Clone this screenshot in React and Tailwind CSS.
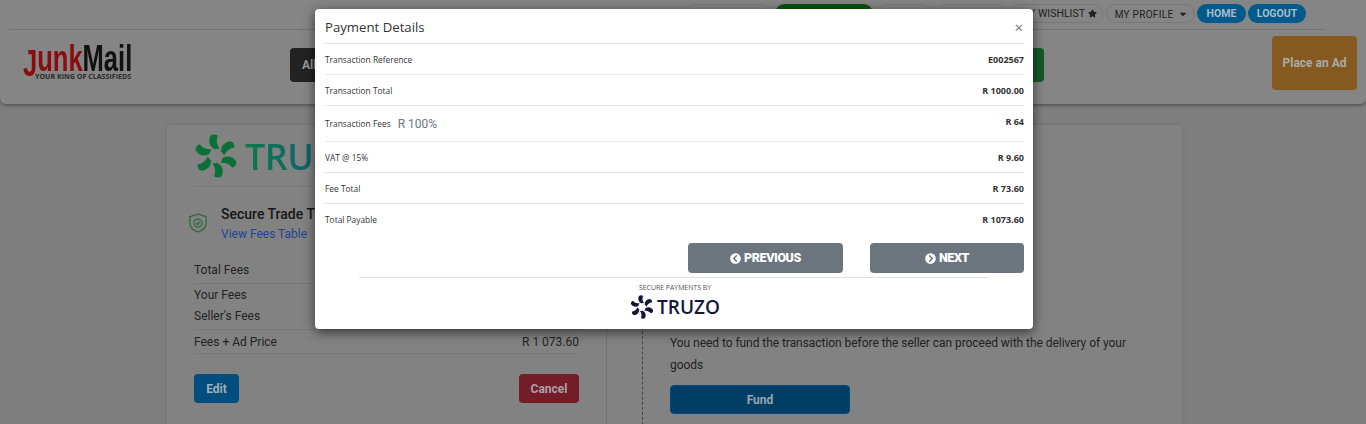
import { FaCaretDown, FaChevronCircleLeft, FaChevronCircleRight, FaStar } from "react-icons/fa";

const rows = [
  { label: "Transaction Reference", value: "E002567", h: "h-[31px]" },
  { label: "Transaction Total", value: "R 1000.00", h: "h-[31px]" },
  { label: "Transaction Fees", extra: "R 100%", value: "R 64", h: "h-[36px]" },
  { label: "VAT @ 15%", value: "R 9.60", h: "h-[31px]" },
  { label: "Fee Total", value: "R 73.60", h: "h-[31px]" },
  { label: "Total Payable", value: "R 1073.60", h: "h-[31px]", last: true },
];

// swirl mark of the truzo logo
const Swirl = ({ className, color }) => (
  <svg viewBox="0 0 48 48" className={className} fill={color}>
    {[0, 60, 120, 180, 240, 300].map((r) => (
      <path
        key={r}
        transform={`rotate(${r} 24 24)`}
        d="M23 17 C17 14 15 8 18 2 C20 0 24 0 26 2 C24 7 25 12 28 16 C26 16 24 16 23 17 Z"
      />
    ))}
  </svg>
);

const Pill = ({ children, className = "" }) => (
  <div className={`h-[19px] rounded-full border border-[#797979] flex items-center justify-center text-[10.500px] text-[#222] ${className}`}>
    {children}
  </div>
);

const FeeRow = ({ label, value }) => (
  <div className="flex justify-between items-center h-[21px]">
    <span>{label}</span>
    <span>{value}</span>
  </div>
);

const Header = () => (
  <div className="h-[104px] bg-[#858585] rounded-b-md shadow-[0_1px_4px_rgba(0,0,0,0.45)] relative z-10">
    <div className="ml-[9px] w-[1316px] h-[30px] border-b border-[#737373] flex justify-end items-start pt-1 pr-[19px]">
      <Pill className="w-[85px] mr-[5px]">BLOG</Pill>
      <div className="w-[98px] h-[19px] rounded-full bg-[#0f5010] mr-[5px]" />
      <Pill className="w-[52px] mr-[7px]">HELP</Pill>
      <Pill className="w-[68px] mr-[6px]">ALERTS</Pill>
      <Pill className="w-[92px] mr-[3px] gap-[3px] pl-[3px]">MY WISHLIST <FaStar className="w-[9px] h-[9px]" /></Pill>
      <Pill className="w-[89px] mr-[2px] gap-[5px] pl-[2px] pt-[1px]">
        <span className="text-[10px] tracking-[0.3px]">MY PROFILE</span> <FaCaretDown className="w-[10px] h-[10px]" />
      </Pill>
      <div className="w-[49px] mr-[2px] h-[19px] rounded-full bg-[#005a8c] text-[#a8bcc8] text-[10.500px] font-bold flex items-center justify-center">HOME</div>
      <div className="w-[58px] h-[19px] rounded-full bg-[#005a8c] text-[#a8bcc8] text-[10.500px] font-bold flex items-center justify-center">LOGOUT</div>
    </div>
    <div className="flex items-start pl-[23px] pr-[9px]">
      <div className="w-[109px] mt-[9px] relative h-[44px]">
        <div className="font-['Liberation_Sans'] font-bold text-[37px] leading-[40px] text-[#111] origin-left scale-x-[0.69] whitespace-nowrap">
          <span className="text-[#8a0c0c] relative top-[5px]">J</span>
          <span className="text-[#8a0c0c]">unk</span>Mail
        </div>
        <div className="absolute left-[12px] top-[33px] text-[7.100px] leading-[8px] font-bold font-['Open_Sans'] text-[#2a2a2a] whitespace-nowrap">YOUR KING OF CLASSIFIEDS</div>
      </div>
      <div className="ml-[158px] w-[754px] mt-[18px] h-[34px] flex">
        <div className="w-[60px] bg-[#222] rounded-l text-[#999] text-xs font-bold flex items-center pl-3">All</div>
        <div className="flex-1 bg-[#808080]" />
        <div className="w-[60px] bg-[#145c28] rounded-r" />
      </div>
      <div className="ml-auto mt-[6px] w-[85px] h-[54px] rounded bg-[#855a20] text-[#aaa] text-xs font-bold flex items-center justify-center">
        Place an Ad
      </div>
    </div>
  </div>
);

const Card = () => (
  <div className="mx-[167px] mt-[21px] w-[1015px] h-[320px] bg-[#828282] shadow-[0_0_6px_rgba(0,0,0,0.12)] flex text-xs text-[#222]">
    <div className="w-[440px] h-full border-r border-[#737373] px-[27px] pt-[10px]">
      <div className="flex items-center gap-[7px] h-[42px]">
        <Swirl className="w-[44px] h-[44px]" color="#0a7038" />
        <span className="text-[36px] leading-[42px] pt-[2px] font-semibold font-['Open_Sans'] tracking-[-0.500px] bg-gradient-to-r from-[#0a7a48] to-[#1a4f80] bg-clip-text text-transparent">TRUZO</span>
      </div>
      <div className="border-b border-[#787878] h-[10px]" />
      <div className="flex items-start mt-[17px] -ml-[5px]">
        <svg viewBox="2 1 20 22" className="w-[18px] h-[22px] mt-[8px] mr-[14px]" fill="none" stroke="#1d6a2c" strokeWidth="1.200">
          <path d="M12 2 L21 5 V12 C21 17 17 20.500 12 22 C7 20.500 3 17 3 12 V5 Z" />
          <circle cx="12" cy="12" r="4.500" />
          <path d="M10 12 L11.500 13.500 L14 10.500" />
        </svg>
        <div>
          <div className="text-[14px] font-medium text-[#161616] leading-5">Secure Trade Transaction</div>
          <div className="text-[#1e4596] leading-5">View Fees Table</div>
        </div>
      </div>
      <div className="mt-[13px] h-[27px] border-b border-[#787878] flex justify-between items-center pb-[1px]">
        <span>Total Fees</span>
        <span>R 73.60</span>
      </div>
      <div className="border-b border-[#787878] pb-[3px]">
        <FeeRow label="Your Fees" value="R 73.60" />
        <FeeRow label="Seller's Fees" value="R 0.00" />
      </div>
      <div className="h-[24px] border-b border-[#787878] flex justify-between items-center">
        <span>Fees + Ad Price</span>
        <span>R 1 073.60</span>
      </div>
      <div className="flex justify-between mt-[20px]">
        <div className="w-[45px] h-[29px] rounded-sm bg-[#004d80] text-[#a0b0b8] font-bold flex items-center justify-center">Edit</div>
        <div className="w-[60px] h-[29px] rounded-sm bg-[#741c28] text-[#a8a0a8] font-bold flex items-center justify-center">Cancel</div>
      </div>
    </div>
    <div className="ml-[35px] h-full border-l border-dashed border-[#444] pl-[27px] pt-[207px] w-[500px]">
      <p className="leading-[22px] w-[480px] tracking-[-0.050px]">You need to fund the transaction before the seller can proceed with the delivery of your goods</p>
      <div className="w-[180px] h-[29px] mt-[9px] rounded-sm bg-[#003e66] border border-[#004a80] text-[#99a8b0] font-bold flex items-center justify-center">Fund</div>
    </div>
  </div>
);

const PaymentModal = () => (
  <div className="absolute left-[315px] top-[9px] z-30 w-[718px] h-[320px] bg-white rounded-sm shadow-[0_3px_12px_rgba(0,0,0,0.6)] pl-[10px] pr-[9px] font-['Open_Sans']">
    <div className="h-[35px] border-b border-[#e5e7eb] flex items-center justify-between pt-[3px]">
      <span className="text-[13.200px] text-[#333]">Payment Details</span>
      <span className="text-[15px] text-[#777] leading-none pr-[1px]">×</span>
    </div>
    {rows.map((r) => (
      <div key={r.label} className={`${r.h} ${r.last ? "" : "border-b border-[#e5e7eb]"} flex items-center justify-between pt-[1px]`}>
        <span className={`text-[8.400px] text-[#333] flex items-center gap-[7px] ${r.extra ? "" : "pt-[1px]"}`}>
          {r.label}
          {r.extra && <span className="text-[12px] text-[#6c757d] font-['Roboto']">{r.extra}</span>}
        </span>
        <span className={`text-[9px] font-bold text-[#333] ${r.extra ? "pb-[4px]" : ""}`}>{r.value}</span>
      </div>
    ))}
    <div className="flex justify-end gap-[27px] mt-[8px]">
      <button className="w-[155px] h-[30px] bg-[#6c757d] rounded-sm text-white text-[12.500px] tracking-[-0.400px] font-black font-['Roboto'] flex items-center justify-center gap-[3px]">
        <FaChevronCircleLeft className="w-[11px] h-[11px]" /> PREVIOUS
      </button>
      <button className="w-[154px] h-[30px] bg-[#6c757d] rounded-sm text-white text-[12.500px] tracking-[-0.400px] font-black font-['Roboto'] flex items-center justify-center gap-[3px]">
        <FaChevronCircleRight className="w-[11px] h-[11px]" /> NEXT
      </button>
    </div>
    <div className="ml-[34px] w-[630px] border-t border-[#dee2e6] mt-[4px]" />
    <div className="w-[90px] ml-[305px] flex flex-col items-center">
      <div className="text-[6.900px] text-[#555] whitespace-nowrap mt-[5px] leading-[10px]">SECURE PAYMENTS BY</div>
      <div className="flex items-center gap-[3px] mt-[2px]">
        <Swirl className="w-[24px] h-[24px] shrink-0" color="#14143c" />
        <span className="text-[19px] font-semibold text-[#14143c] leading-[23px]">TRUZO</span>
      </div>
    </div>
  </div>
);

const App = () => {
  return (
    <div className="relative h-[424px] w-[1366px] overflow-hidden bg-[#7f7f7f] font-['Roboto',sans-serif]">
      <Header />
      <Card />
      <PaymentModal />
    </div>
  );
};

export default App;
